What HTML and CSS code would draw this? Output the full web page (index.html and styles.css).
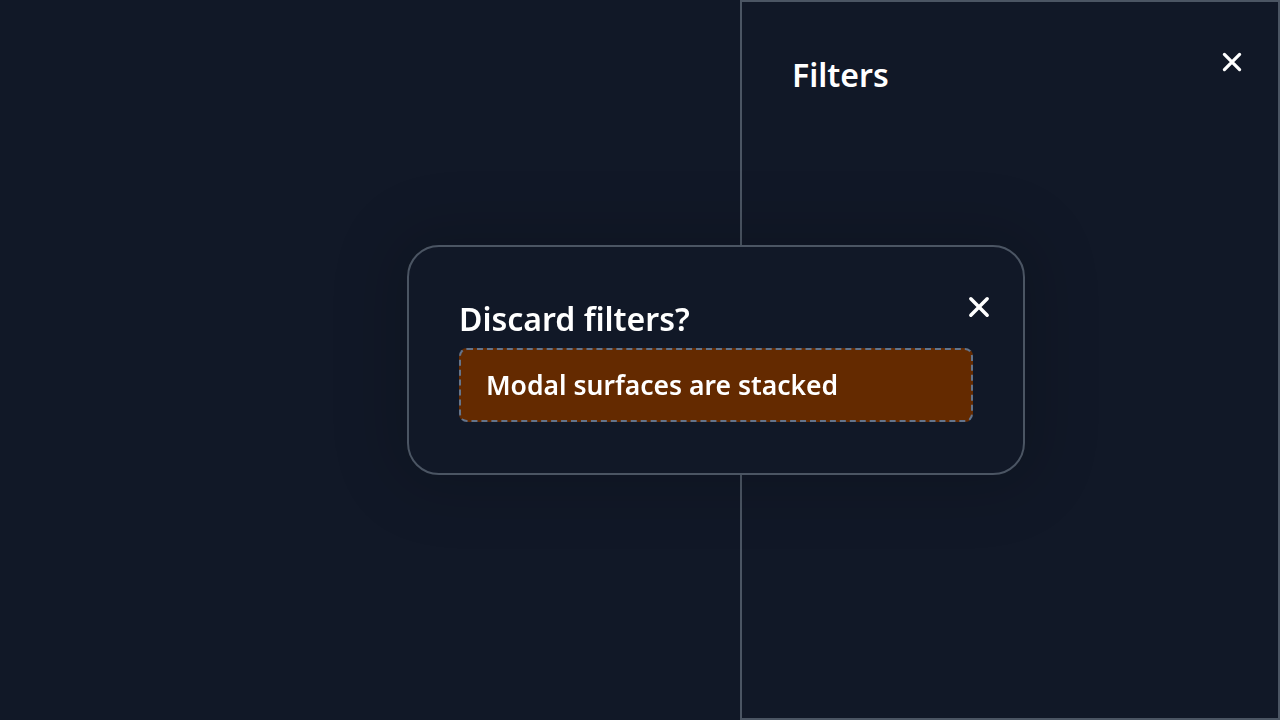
FILE: index.html
```html
<!DOCTYPE html>
<html lang="en">
<head>
<meta charset="utf-8">
<title>Filters</title>
<link rel="stylesheet" href="styles.css">
</head>
<body>
<main class="page"></main>
<aside class="drawer">
  <h2 class="drawer-title">Filters</h2>
  <button class="close drawer-close" aria-label="Close filters">
    <svg viewBox="0 0 24 24" width="26" height="26"><path d="M5 5L19 19M19 5L5 19" stroke="#fff" stroke-width="3" stroke-linecap="round"/></svg>
  </button>
</aside>
<div class="overlay">
  <section class="modal" role="dialog">
    <h2 class="modal-title">Discard filters?</h2>
    <div class="notice">Modal surfaces are stacked</div>
    <button class="close modal-close" aria-label="Close dialog">
      <svg viewBox="0 0 24 24" width="28" height="28"><path d="M5 5L19 19M19 5L5 19" stroke="#fff" stroke-width="3" stroke-linecap="round"/></svg>
    </button>
  </section>
</div>
</body>
</html>
```
FILE: styles.css
```css
* { box-sizing: border-box; }
html, body {
  margin: 0;
  height: 100%;
  background: #111827;
  color: #fff;
  font-family: "Noto Sans", Lato, sans-serif;
  overflow: hidden;
}
.page { height: 100%; }
.drawer {
  position: fixed;
  top: 0;
  right: 0;
  width: 540px;
  height: 720px;
  background: #111827;
  border: 2px solid #4b5563;
  padding: 53px 50px;
}
.drawer-title {
  margin: 0;
  font-size: 32px;
  font-weight: 600;
  line-height: 40px;
}
.close {
  position: absolute;
  background: none;
  border: 0;
  padding: 0;
  display: flex;
  align-items: center;
  justify-content: center;
  cursor: pointer;
}
.drawer-close { top: 47px; right: 33px; }
.overlay {
  position: fixed;
  inset: 0;
  display: flex;
  align-items: center;
  justify-content: center;
  padding-left: 152px;
}
.modal {
  position: relative;
  width: 618px;
  height: 230px;
  background: #111827;
  border: 2px solid #4b5563;
  border-radius: 32px;
  padding: 50px;
  box-shadow: 0 0 60px 20px rgba(0, 0, 0, 0.13);
}
.modal-title {
  margin: 0 0 7px;
  font-size: 32px;
  font-weight: 600;
  line-height: 44px;
}
.notice {
  height: 74px;
  display: flex;
  align-items: center;
  padding: 0 25px;
  background: #642a00;
  border: 2px dashed #64748b;
  border-radius: 8px;
  font-size: 26.5px;
  font-weight: 600;
}
.modal-close { top: 46px; right: 30px; }
```
